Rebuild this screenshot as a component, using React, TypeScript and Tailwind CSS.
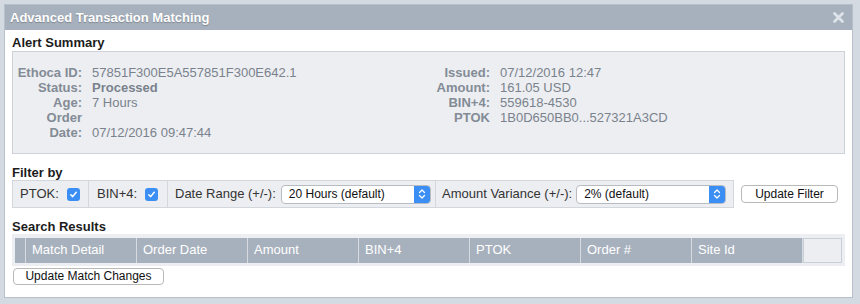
export default function App() {
  const left = [
    { label: "Ethoca ID:", value: "57851F300E5A557851F300E642.1" },
    { label: "Status:", value: "Processed", bold: true },
    { label: "Age:", value: "7 Hours" },
  ];
  const right = [
    { label: "Issued:", value: "07/12/2016 12:47" },
    { label: "Amount:", value: "161.05 USD" },
    { label: "BIN+4:", value: "559618-4530" },
    { label: "PTOK", value: "1B0D650BB0...527321A3CD" },
  ];
  const cols = ["Match Detail", "Order Date", "Amount", "BIN+4", "PTOK", "Order #", "Site Id"];

  return (
    <div className="h-[304px] w-[860px] bg-[#d3dae2] pl-[4px] pt-[4px] font-['Liberation_Sans',Arial,sans-serif]">
      <div className="flex h-[294px] w-[849px] flex-col border border-[#b7c0ca] bg-white">
        {/* Title bar */}
        <div className="flex h-[25px] items-center justify-between bg-[#a7b1bd] pl-[5px] pr-[8px]">
          <span className="text-[13px] font-bold text-white [text-shadow:0_1px_1px_rgba(0,0,0,0.25)]">
            Advanced Transaction Matching
          </span>
          <svg width="11" height="11" viewBox="0 0 11 11">
            <path d="M1.5 1.5 L9.5 9.5 M9.5 1.5 L1.5 9.5" stroke="#dfe4ea" strokeWidth="2.6" strokeLinecap="round" />
          </svg>
        </div>

        <div className="flex flex-col px-[7px]">
          {/* Alert Summary */}
          <div className="pt-[5px] text-[13px] font-bold leading-[15px] text-[#1c1c1c]">Alert Summary</div>
          <div className="mt-[1px] flex h-[103px] border border-[#cdd2d8] bg-[#eceef1] pt-[13px] text-[13px] leading-[15px] text-[#7a828d]">
            <div className="grid w-[407px] grid-cols-[69px_1fr] content-start gap-x-[10px]">
              {left.map((r) => (
                <div key={r.label} className="contents">
                  <span className="text-right font-bold text-[#838b96]">{r.label}</span>
                  <span className={r.bold ? "font-bold" : ""}>{r.value}</span>
                </div>
              ))}
              <span className="text-right font-bold text-[#838b96]">
                Order
                <br />
                Date:
              </span>
              <span className="self-end">07/12/2016 09:47:44</span>
            </div>
            <div className="grid grid-cols-[70px_1fr] content-start gap-x-[10px]">
              {right.map((r) => (
                <div key={r.label} className="contents">
                  <span className="text-right font-bold text-[#838b96]">{r.label}</span>
                  <span>{r.value}</span>
                </div>
              ))}
            </div>
          </div>

          {/* Filter by */}
          <div className="mt-[11px] text-[13px] font-bold leading-[15px] text-[#1c1c1c]">Filter by</div>
          <div className="flex items-center">
            <div className="flex h-[28px] items-center border border-[#d2d7dd] bg-[#eceef1] text-[13px] text-[#333]">
              <div className="flex h-full w-[76px] items-center gap-[8px] border-r border-[#d2d7dd] pl-[7px]">
                PTOK:
                <Check />
              </div>
              <div className="flex h-full w-[79px] items-center gap-[8px] border-r border-[#d2d7dd] pl-[8px]">
                BIN+4:
                <Check />
              </div>
              <div className="flex h-full w-[268px] items-center gap-[5px] border-r border-[#d2d7dd] pl-[7px]">
                Date Range (+/-):
                <Select value="20 Hours (default)" />
              </div>
              <div className="flex h-full w-[297px] items-center gap-[4px] pl-[6px]">
                Amount Variance (+/-):
                <Select value="2% (default)" />
              </div>
            </div>
            <button className="ml-[7px] h-[18px] w-[97px] rounded-[4px] border border-[#b9b9b9] bg-white text-[12px] leading-[16px] text-[#111]">
              Update Filter
            </button>
          </div>

          {/* Search Results */}
          <div className="mt-[11px] text-[13px] font-bold leading-[15px] text-[#1c1c1c]">Search Results</div>
          <div className="flex h-[32px] items-center bg-[#eceef1] px-[3px]">
            <div className="flex h-[25px] w-full">
              <div className="w-[11px] border-r border-[#d6dbe1] bg-[#a7b1bd]" />
              {cols.map((c) => (
                <div
                  key={c}
                  className="flex w-[111px] items-center border-r border-[#d6dbe1] bg-[#a7b1bd] pl-[6px] text-[13px] text-white"
                >
                  {c}
                </div>
              ))}
              <div className="flex-1 border border-[#c9cfd6] bg-[#eceef1]" />
            </div>
          </div>
          <div className="mt-[2px] flex">
            <button className="ml-[1px] h-[17px] w-[151px] rounded-[4px] border border-[#b9b9b9] bg-white text-[12px] leading-[15px] text-[#111]">
              Update Match Changes
            </button>
          </div>
        </div>
      </div>
    </div>
  );
}

function Check() {
  return (
    <span className="flex h-[13px] w-[13px] items-center justify-center rounded-[3px] bg-[#3b8ef3]">
      <svg width="9" height="9" viewBox="0 0 9 9">
        <path d="M1.8 4.8 L3.7 6.6 L7.2 2.3" fill="none" stroke="white" strokeWidth="1.5" strokeLinecap="round" strokeLinejoin="round" />
      </svg>
    </span>
  );
}

function Select({ value }: { value: string }) {
  return (
    <div className="flex h-[19px] w-[150px] items-stretch overflow-hidden rounded-[4px] border border-[#b8bcc2] bg-white">
      <span className="flex flex-1 items-center pl-[7px] text-[12px] text-[#111]">{value}</span>
      <span className="flex w-[16px] items-center justify-center bg-[#3b8ef3]">
        <svg width="8" height="12" viewBox="0 0 8 12">
          <path d="M1.5 4.5 L4 2 L6.5 4.5 M1.5 7.5 L4 10 L6.5 7.5" fill="none" stroke="white" strokeWidth="1.3" strokeLinecap="round" strokeLinejoin="round" />
        </svg>
      </span>
    </div>
  );
}
